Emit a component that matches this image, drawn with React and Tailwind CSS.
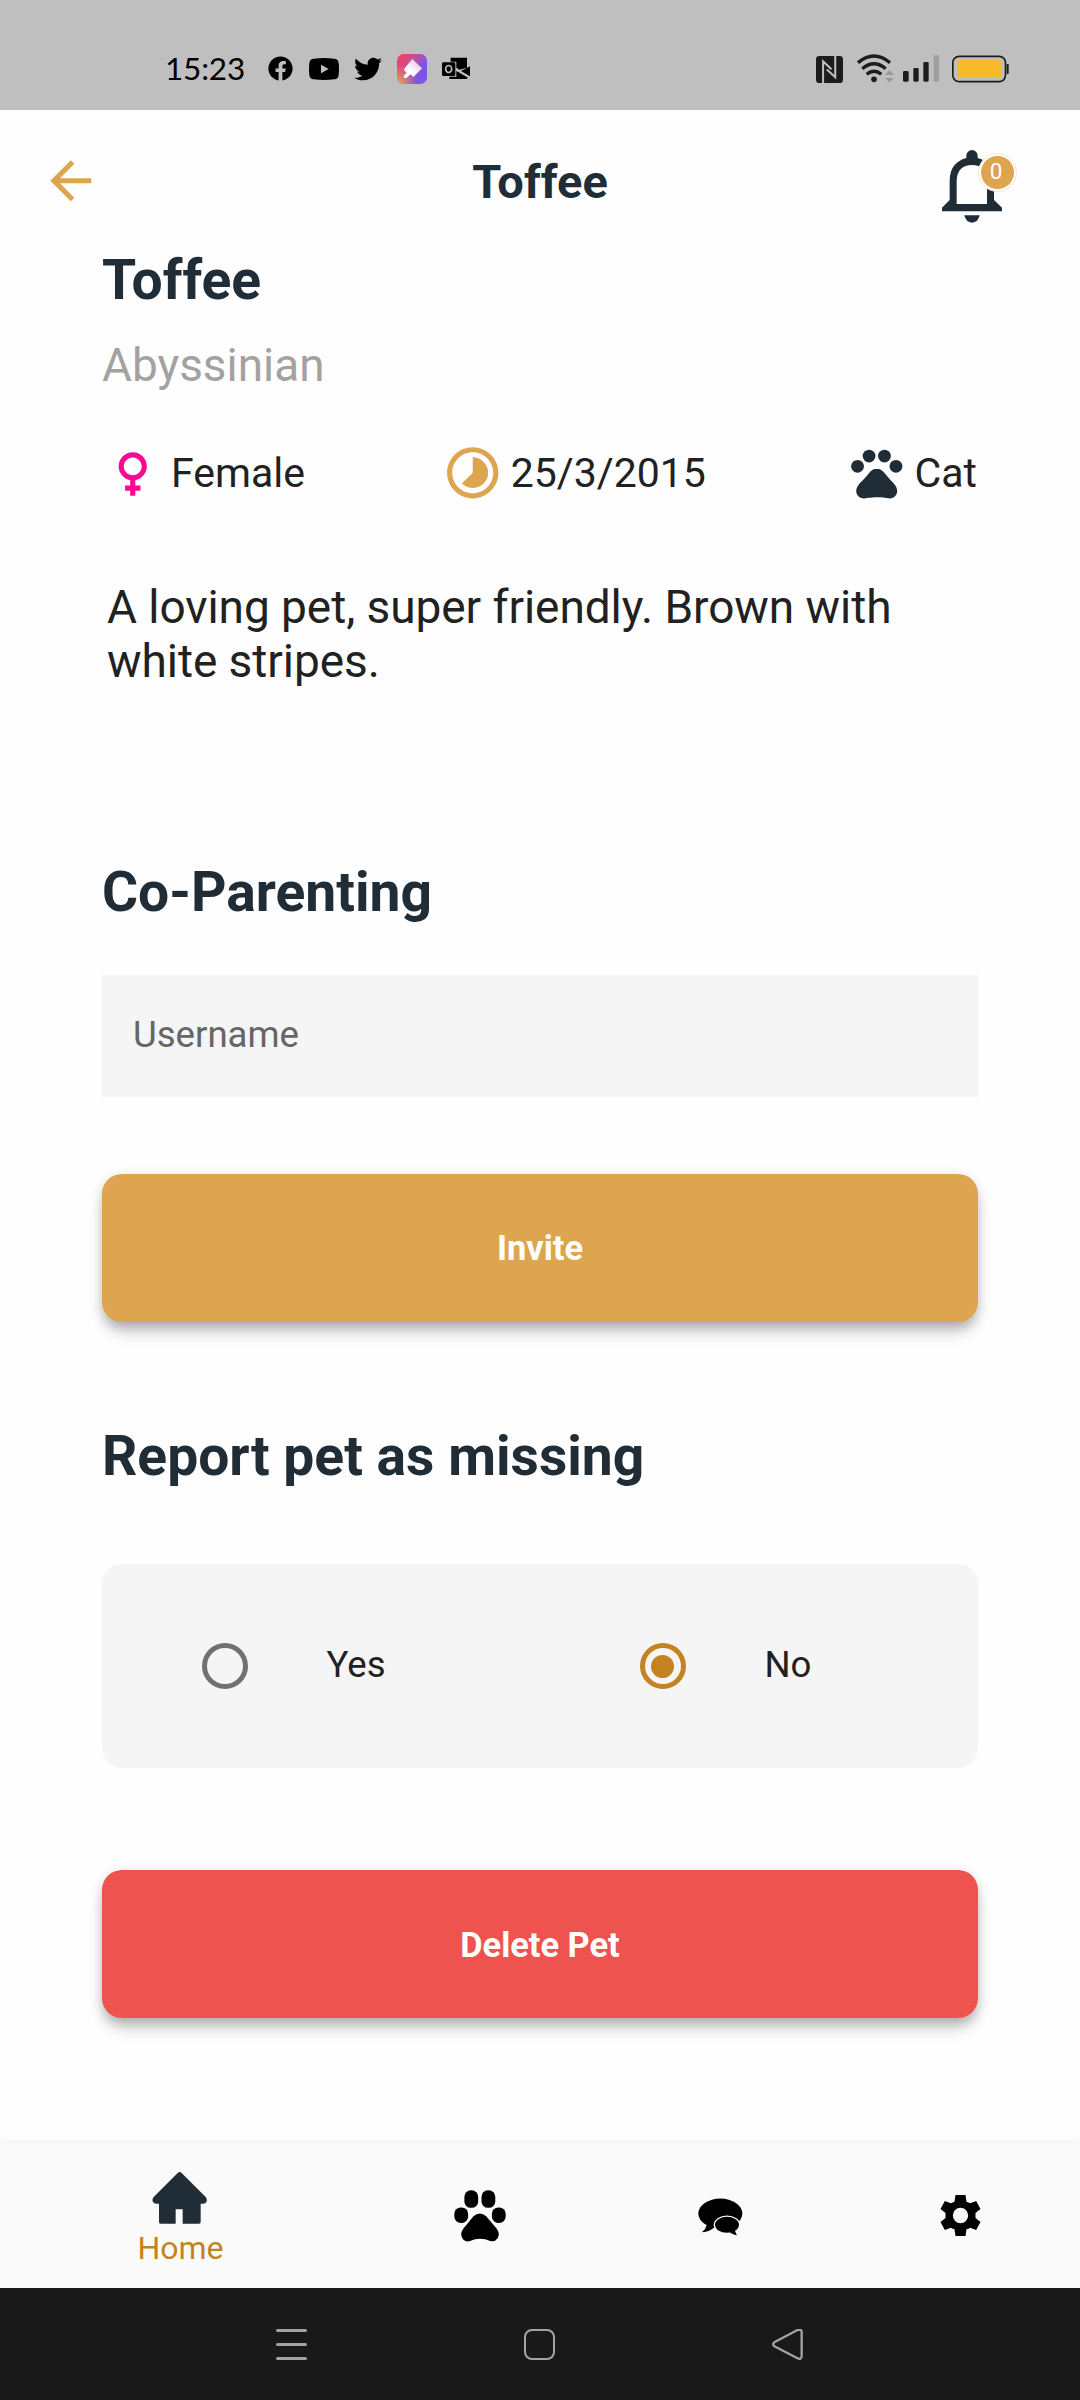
import React from "react";
import { MdArrowBack, MdFemale, MdTimelapse, MdPets } from "react-icons/md";
import { FaFacebook, FaTwitter } from "react-icons/fa";

function StatusBar() {
  return (
    <div className="flex h-[109.5px] items-start bg-[#bfbfbf] pt-[54px] text-black">
      <span className="-mt-px ml-[165px] block h-[30px] w-[80px] whitespace-nowrap font-[Lato] text-[31.5px] leading-[31px] tracking-[-0.2px]">
        15:23
      </span>
      <FaFacebook className="ml-[23px] mt-[2px] size-[25px]" />
      <svg className="ml-[16px] mt-[4px] h-[22px] w-[30px]" viewBox="0 0 90 66">
        <path
          fillRule="evenodd"
          d="M14 2Q45-2 76 2Q88 3 89 16Q91 33 89 50Q88 63 76 64Q45 68 14 64Q2 63 1 50Q-1 33 1 16Q2 3 14 2ZM36 20V46L59 33Z"
        />
      </svg>
      <FaTwitter className="ml-[15px] mt-[1px] size-[28px]" />
      <svg className="ml-[15px] size-[30px]" viewBox="0 0 90 90">
        <defs>
          <linearGradient id="appBase" x1="0" y1="0" x2="1" y2="0.6">
            <stop offset="0.15" stopColor="#ee4468" />
            <stop offset="0.5" stopColor="#c04f9f" />
            <stop offset="0.85" stopColor="#7a55e8" />
          </linearGradient>
          <radialGradient id="appGlow" cx="0" cy="1" r="0.65">
            <stop offset="0" stopColor="#f0a050" />
            <stop offset="1" stopColor="#f0a050" stopOpacity="0" />
          </radialGradient>
          <linearGradient id="appTile" x1="1" y1="0" x2="0.2" y2="1">
            <stop offset="0" stopColor="#e2b4e4" />
            <stop offset="0.7" stopColor="#ffffff" />
          </linearGradient>
        </defs>
        <rect width="90" height="90" rx="20" fill="url(#appBase)" />
        <rect width="90" height="90" rx="20" fill="url(#appGlow)" />
        <path
          d="M46 15L75 43L49 69L41 61L28 72Q20 74 20 66L29 56L21 48L24 41Z"
          fill="url(#appTile)"
        />
      </svg>
      <svg className="ml-[15px] mt-[3px] h-[23px] w-[28px]" viewBox="0 0 84 69">
        <path d="M26 2H75V32L52 38L43 32V14H26Z" />
        <path d="M84 28V58L57 42ZM50 46L78 62Q76 66 70 66H22V59H43V42Z" />
        <rect x="0" y="16" width="40" height="41" rx="4" />
        <ellipse cx="20" cy="36" rx="9" ry="10.5" fill="none" stroke="#bfbfbf" strokeWidth="5" />
      </svg>

      <svg className="ml-[346px] mt-[2px] size-[27px]" viewBox="0 0 80 80" fill="#1c1c1c">
        <rect width="80" height="80" rx="10" />
        <path
          d="M21 80V16L46 39M57 0V63L32 40"
          fill="none"
          stroke="#bfbfbf"
          strokeWidth="6"
        />
      </svg>
      <svg className="ml-[14px] mt-[-1px] h-[30px] w-[37px]" viewBox="0 0 111 90" fill="none">
        <g stroke="#1c1c1c" strokeWidth="10">
          <path d="M3 29Q51-11 99 29" />
          <path d="M16 47Q51 17 86 47" />
          <path d="M29 64Q51 46 73 64" />
        </g>
        <circle cx="51" cy="79" r="8.5" fill="#1c1c1c" />
        <path d="M84 66L97.500 52L111 66ZM84 75L97.500 88L111 75Z" fill="#999999" />
      </svg>
      <svg className="ml-[9px] mt-px h-[27px] w-[36px]" viewBox="0 0 108 81" fill="#1c1c1c">
        <rect x="0" y="48" width="17" height="32" rx="4" />
        <rect x="31" y="39" width="16" height="41" rx="4" />
        <rect x="61" y="21" width="16" height="59" rx="4" />
        <rect x="92" y="1" width="16" height="79" rx="4" fill="#9f9f9f" />
      </svg>
      <svg className="ml-[13px] mt-px h-[28px] w-[57px]" viewBox="0 0 171 84">
        <rect x="2.500" y="4" width="158" height="76" rx="19" fill="none" stroke="#1c1c1c" strokeWidth="5" />
        <rect x="15" y="15" width="134" height="54" rx="6" fill="#f6ba2b" />
        <rect x="164" y="27" width="6" height="30" rx="2" fill="#1c1c1c" />
      </svg>
    </div>
  );
}

function Bell() {
  return (
    <div className="relative h-[73px] w-[60px]">
      <svg className="h-[73px] w-[60px]" viewBox="0 0 180 219" fill="#212d36">
        <path
          fillRule="evenodd"
          d="M73 24V17A17 17 0 0 1 107 17V24Q156 38 156 92V150L180 173V184H0V173L23 150V92Q23 38 73 24ZM44 162H135V92Q133 45 90 45Q46 45 44 92Z"
        />
        <path d="M67 196H113Q108 218 90 218Q72 218 67 196Z" />
      </svg>
      <div className="absolute left-[36px] top-[3px] flex size-[39px] items-center justify-center rounded-full border border-[#f7e6cb] bg-white">
        <div className="flex size-[33px] items-center justify-center rounded-full bg-[#dda550] pr-[3px] pb-[2px] text-[22.5px] leading-none text-white">
          0
        </div>
      </div>
    </div>
  );
}

function Header() {
  return (
    <div className="grid h-[144px] grid-cols-3 items-center">
      <MdArrowBack className="-mt-px ml-[40px] size-[61.5px] text-[#dda550]" />
      <h1 className="mt-px text-center text-[47px] font-bold leading-[60px] text-[#212d36]">Toffee</h1>
      <div className="mr-[78px] mt-[10px] justify-self-end">
        <Bell />
      </div>
    </div>
  );
}

function Fact({ icon, label }) {
  return (
    <div className="flex items-center gap-[7.5px]">
      {icon}
      <span>{label}</span>
    </div>
  );
}

function Heading({ children }) {
  return <h2 className="text-[55.2px] font-bold leading-[60px] text-[#212d36]">{children}</h2>;
}

const raised =
  "flex h-[148px] w-full shrink-0 items-center justify-center rounded-[20px] pt-[3px] text-[34.4px] font-bold text-white shadow-[0_12px_15px_-3px_rgba(0,0,0,0.24),0_3px_12px_0_rgba(0,0,0,0.15)]";

function Option({ label, checked }) {
  return (
    <div className="flex flex-1 items-center pl-[99.5px]">
      <div
        className={
          checked
            ? "flex size-[46px] items-center justify-center rounded-full border-[5px] border-[#c48322]"
            : "size-[46px] rounded-full border-[5px] border-[#717171]"
        }
      >
        {checked && <div className="size-[23px] rounded-full bg-[#c48322]" />}
      </div>
      <span className="-mt-px ml-[79px] text-[36.6px] leading-none text-[#212121]">{label}</span>
    </div>
  );
}

function TabBar() {
  return (
    <div className="flex h-[145px] shrink-0 bg-[#fafafa] shadow-[0_-2px_6px_rgba(0,0,0,0.05)]">
      <div className="flex w-[360px] flex-col items-center pt-[29px]">
        <svg className="mr-[1px] h-[52px] w-[55px]" viewBox="156 155 165 156" fill="#212d36">
          <path d="M233 158Q239 152 245 158L317 230Q323 237 319 245Q316 250 310 250H302V305Q302 310 297 310H248V267H227V310H182Q177 310 177 305V250H168Q160 250 158 243Q156 236 161 230Z" />
        </svg>
        <span className="mt-[4px] pl-px text-[32px] leading-[40px] text-[#c48322]">Home</span>
      </div>
      <div className="flex w-[240px] items-center justify-center">
        <svg className="h-[52px] w-[52px]" viewBox="1064 209 155 155">
          <rect x="1095" y="210" width="41" height="52" rx="19" />
          <rect x="1146" y="210" width="41" height="52" rx="19" />
          <rect x="1065" y="261" width="41" height="46" rx="19" />
          <rect x="1177" y="261" width="41" height="46" rx="19" />
          <path d="M1122 287Q1141 271 1160 287L1192 325Q1202 340 1194 353Q1186 365 1172 361Q1141 347 1112 361Q1097 366 1089 353Q1081 340 1091 325Z" />
        </svg>
      </div>
      <div className="flex w-[240px] items-center justify-center">
        <svg className="mt-[3px] h-[38px] w-[45px]" viewBox="294 236 135 113">
          <ellipse cx="361" cy="282" rx="66" ry="45" />
          <path d="M321 314Q318 328 306 338Q330 338 344 322Z" />
          <ellipse cx="381" cy="316" rx="40" ry="28" fill="#fafafa" />
          <ellipse cx="381" cy="316" rx="36" ry="24" />
          <path d="M389 338Q400 346 411 348L404 332Z" />
        </svg>
      </div>
      <div className="flex w-[240px] items-center justify-center">
        <svg className="h-[41px] w-[41px]" viewBox="1018.500 225 123 123">
          <path
            fillRule="evenodd"
            d="M1065 225H1095L1098 245Q1104 247 1109 250L1127 243L1140 267L1125 279V294L1140 306L1127 330L1109 323Q1104 326 1098 328L1095 348H1065L1062 328Q1056 326 1051 323L1033 330L1020 306L1035 294V279L1020 267L1033 243L1051 250Q1056 247 1062 245ZM1080 263.500A23 23 0 1 0 1080 309.500A23 23 0 1 0 1080 263.500Z"
          />
        </svg>
      </div>
    </div>
  );
}

function SystemNav() {
  return (
    <div className="flex h-[112px] shrink-0 items-center justify-center gap-[217px] bg-[#191919]">
      <div className="flex h-[31px] w-[31px] flex-col justify-between">
        <div className="h-[3px] rounded-sm bg-[#a3a3a3]" />
        <div className="h-[3px] rounded-sm bg-[#a3a3a3]" />
        <div className="h-[3px] rounded-sm bg-[#a3a3a3]" />
      </div>
      <div className="size-[31px] rounded-[8px] border-[2.5px] border-[#a3a3a3]" />
      <svg className="h-[31px] w-[32px]" viewBox="0 0 96 93" fill="none">
        <path
          d="M75 4Q89-2 89 10V81Q89 94 75 87L7 52Q0 46 7 40Z"
          stroke="#a3a3a3"
          strokeWidth="7"
          strokeLinejoin="round"
        />
      </svg>
    </div>
  );
}

export default function App() {
  return (
    <div className="flex h-[2400px] w-[1080px] flex-col overflow-hidden bg-[#fefefe] font-[Roboto,sans-serif]">
      <StatusBar />
      <Header />
      <main className="-mt-[3.5px] flex flex-1 flex-col px-[102px]">
        <Heading>Toffee</Heading>
        <p className="mt-[25px] text-[45.9px] leading-[60px] text-[#a5a1a1]">Abyssinian</p>
        <div className="mr-px mt-[47px] flex h-[62px] items-center justify-between text-[41px] leading-[60px] text-[#212121]">
          <Fact icon={<MdFemale className="size-[61.5px] text-[#fb0892]" />} label="Female" />
          <div className="-ml-[3px]">
            <Fact icon={<MdTimelapse className="size-[61.5px] text-[#dda550]" />} label="25/3/2015" />
          </div>
          <Fact icon={<MdPets className="size-[61.5px] text-[#212d36]" />} label="Cat" />
        </div>
        <p className="ml-[5px] mt-[76px] h-[108px] w-[800px] text-[46px] leading-[54px] tracking-[-0.06px] text-[#212121]">
          A loving pet, super friendly. Brown with white stripes.
        </p>
        <div className="mt-[174px]">
          <Heading>Co-Parenting</Heading>
        </div>
        <input
          placeholder="Username"
          className="mt-[53px] h-[122px] w-full shrink-0 bg-[#f5f5f5] px-[31px] pb-[4px] text-[36.6px] outline-none placeholder:text-[#666666]"
        />
        <div className="mt-[76.5px]">
          <button className={raised + " bg-[#dda550]"}>Invite</button>
        </div>
        <div className="mt-[104.5px]">
          <Heading>Report pet as missing</Heading>
        </div>
        <div className="mt-[78px] flex h-[204px] shrink-0 rounded-[20px] bg-[#f5f5f5]">
          <Option label="Yes" />
          <Option label="No" checked />
        </div>
        <div className="mt-[102px]">
          <button className={raised + " bg-[#ef534f]"}>Delete Pet</button>
        </div>
      </main>
      <TabBar />
      <SystemNav />
    </div>
  );
}
